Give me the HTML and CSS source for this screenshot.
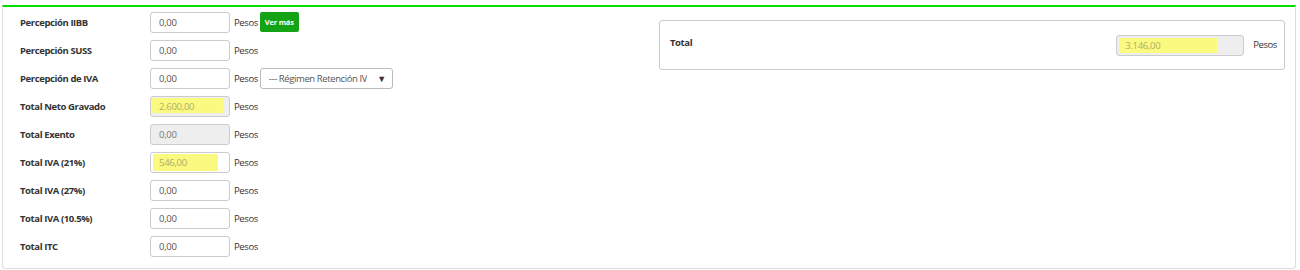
FILE: index.html
```html
<!doctype html>
<html lang="es">
<head><meta charset="utf-8">
	<title>Totales</title>
<link rel="stylesheet" href="styles.css">
</head>
<body>
	<div class="panel">
		<div class="cols">
			<div class="left">
				<div class="row">
					<label>Percepción IIBB</label>
					<input type="text" value="0,00">
					<span class="unit">Pesos</span>
					<button class="btn-ok">Ver más</button>
				</div>
				<div class="row">
					<label>Percepción SUSS</label>
					<input type="text" value="0,00">
					<span class="unit">Pesos</span>
				</div>
				<div class="row">
					<label>Percepción de IVA</label>
					<input type="text" value="0,00">
					<span class="unit">Pesos</span>
					<div class="sel"><span>--- Régimen Retención IVA</span><i>&#9660;</i></div>
				</div>
				<div class="row">
					<label>Total Neto Gravado</label>
					<input type="text" value="2.600,00" class="ro hl" readonly>
					<span class="unit">Pesos</span>
				</div>
				<div class="row">
					<label>Total Exento</label>
					<input type="text" value="0,00" class="ro" readonly>
					<span class="unit">Pesos</span>
				</div>
				<div class="row">
					<label>Total IVA (21%)</label>
					<input type="text" value="546,00" class="hl hl-s">
					<span class="unit">Pesos</span>
				</div>
				<div class="row">
					<label>Total IVA (27%)</label>
					<input type="text" value="0,00">
					<span class="unit">Pesos</span>
				</div>
				<div class="row">
					<label>Total IVA (10.5%)</label>
					<input type="text" value="0,00">
					<span class="unit">Pesos</span>
				</div>
				<div class="row">
					<label>Total ITC</label>
					<input type="text" value="0,00">
					<span class="unit">Pesos</span>
				</div>
			</div>
			<div class="right">
				<div class="total-box">
					<label>Total</label>
					<input type="text" value="3.146,00" class="ro hl hl-l" readonly>
					<span class="unit">Pesos</span>
				</div>
			</div>
		</div>
	</div>
</body>
</html>
```
FILE: styles.css
```css
body{margin:0;padding:5px 4px 0 2px;font-family:"Open Sans",sans-serif;font-size:9.5px;letter-spacing:-.4px;color:#333}
.panel{border:1px solid #ddd;border-top:2px solid #00dd00;border-radius:0 0 4px 4px;height:264px;box-sizing:border-box}
.cols{display:flex}
.left{width:656px;padding:1px 0 0 17px;box-sizing:border-box}
.right{flex:1;padding:13px 10px 0 0}
.row{display:flex;align-items:center;height:28px}
.row label{width:130px;font-weight:bold}
input{font-family:inherit;font-size:9.5px;letter-spacing:-.3px;color:#555;width:80px;height:21px;box-sizing:border-box;border:1px solid #ccc;border-radius:3px;padding:0 8px;background:#fff;margin:0;outline:0}
input.ro{background-color:#eee;color:#777}
input.hl{background-image:linear-gradient(#fafa80,#fafa80);background-repeat:no-repeat;background-position:1px 1px;background-size:71px 15px;color:#b0ad6a}
input.hl-s{background-size:65px 17px;background-position:2px 1px}
.unit{margin-left:4px;color:#333}
.btn-ok{margin-left:2px;height:20px;padding:0 5px;border:0;border-radius:2px;background:#14a314;color:#fff;font-family:inherit;font-size:7.5px;letter-spacing:-.2px;font-weight:bold}
.sel{margin-left:2px;width:133px;height:21px;box-sizing:border-box;border:1px solid #bbb;border-radius:3px;display:flex;align-items:center;justify-content:space-between;padding:0 6px 0 8px;color:#555}
.sel span{overflow:hidden;white-space:nowrap;width:98px}
.sel i{font-style:normal;font-size:9px;color:#333}
.total-box{display:flex;align-items:center;height:50px;border:1px solid #ccc;border-radius:3px;padding:0 7px 0 10px;box-sizing:border-box}
.total-box label{flex:1;font-weight:bold;margin-bottom:6px}
input.hl-l{width:128px;background-size:98px 15px;background-position:2px 2px}
.total-box .unit{margin-left:9px;margin-bottom:2px}
```
